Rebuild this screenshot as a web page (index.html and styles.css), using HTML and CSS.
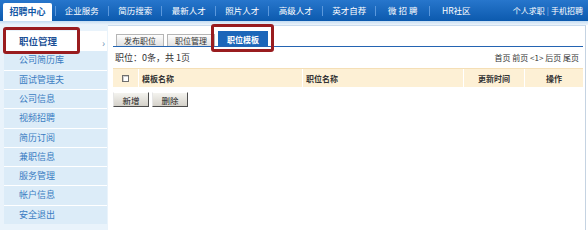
FILE: index.html
```html
<!DOCTYPE html>
<html lang="zh-CN">
<head>
<meta charset="utf-8">
<title>招聘中心 - 职位模板</title>
<link rel="stylesheet" href="styles.css">
</head>
<body>
<header class="topbar">
  <nav class="nav">
    <a class="nav-item active">招聘中心</a>
    <a class="nav-item sep">企业服务</a>
    <a class="nav-item sep">简历搜索</a>
    <a class="nav-item sep">最新人才</a>
    <a class="nav-item sep">照片人才</a>
    <a class="nav-item sep">高级人才</a>
    <a class="nav-item sep">英才自荐</a>
    <a class="nav-item sep">微 招 聘</a>
    <a class="nav-item">HR社区</a>
  </nav>
  <div class="user-links">个人求职<span class="bar">|</span>手机招聘</div>
</header>
<div class="strip"></div>
<div class="main">
  <aside class="sidebar">
    <div class="side-current"><span>职位管理</span><span class="arrow">›</span></div>
    <ul class="side-list">
      <li>公司简历库</li>
      <li>面试管理夫</li>
      <li>公司信息</li>
      <li>视频招聘</li>
      <li>简历订阅</li>
      <li>兼职信息</li>
      <li>服务管理</li>
      <li>帐户信息</li>
      <li>安全退出</li>
    </ul>
  </aside>
  <section class="content">
    <div class="tabs">
      <span class="tab">发布职位</span>
      <span class="tab">职位管理</span>
      <span class="tab current">职位模板</span>
    </div>
    <div class="info-row">
      <span>职位：0条，共 1页</span>
      <span class="pager">首页 前页 &lt;1&gt; 后页 尾页</span>
    </div>
    <div class="grid-head">
      <div class="cell check"><span class="box"></span></div>
      <div class="cell">模板名称</div>
      <div class="cell">职位名称</div>
      <div class="cell center">更新时间</div>
      <div class="cell center">操作</div>
    </div>
    <div class="actions">
      <button class="btn">新增</button>
      <button class="btn">删除</button>
    </div>
  </section>
</div>
<div class="mark mark-side"></div>
<div class="mark mark-tab"></div>
</body>
</html>
```
FILE: styles.css
```css
* { box-sizing: border-box; margin: 0; padding: 0; }
body {
  width: 588px;
  height: 230px;
  overflow: hidden;
  position: relative;
  background: #fff;
  font-family: "Noto Sans CJK SC", "Liberation Sans", sans-serif;
  font-size: 9px;
  color: #333;
}
.topbar {
  height: 21px;
  background: linear-gradient(#2776cc, #0c5aae);
  display: flex;
  justify-content: space-between;
}
.nav { display: flex; padding-left: 3px; height: 21px; }
.nav-item {
  display: block;
  width: 53.5px;
  line-height: 21px;
  text-align: center;
  color: #fff;
  position: relative;
  font-size: 8.5px;
}
.nav-item.sep::after {
  content: "";
  position: absolute;
  right: 0;
  top: 6px;
  height: 10px;
  width: 1px;
  background: #5b98dc;
}
.nav-item.active {
  width: 49px;
  margin-right: 3px;
  margin-top: 3px;
  height: 18px;
  line-height: 18px;
  background: #fff;
  color: #1257a5;
  font-weight: bold;
  font-size: 9px;
  border-radius: 2px 2px 0 0;
}
.nav-item.active + .nav-item::before {
  content: "";
  position: absolute;
  left: 0;
  top: 6px;
  height: 10px;
  width: 1px;
  background: #5b98dc;
}
.user-links { color: #fff; line-height: 21px; padding-right: 5px; font-size: 8px; }
.user-links .bar { color: #8fb9e8; margin: 0 2px; }
.strip { height: 4px; background: linear-gradient(#c4dcf2, #eef5fc); }
.main { display: flex; height: 205px; }
.sidebar {
  width: 108px;
  background: #e9f3fb;
  padding: 6px 1px 0 4px;
}
.side-current {
  height: 19.4px;
  background: #fff;
  display: flex;
  justify-content: space-between;
  align-items: center;
  padding-left: 15px;
  padding-right: 2px;
  font-weight: bold;
  color: #1b4f96;
  font-size: 9.5px;
}
.side-current .arrow { color: #6b8fb5; font-weight: normal; font-size: 10px; margin-top: 3px; }
.side-list { list-style: none; }
.side-list li {
  height: 19.3px;
  line-height: 18.3px;
  border-top: 1px solid #fff;
  background: #dcecf8;
  padding-left: 15px;
  color: #3a7cc2;
}
.content {
  flex: 1;
  margin-right: 2px;
  border-top: 1px solid #cadcee;
  border-right: 1px solid #c5d3e2;
  padding: 0 2px 0 5px;
}
.tabs {
  height: 21px;
  display: flex;
  align-items: flex-end;
  gap: 3px;
  padding-left: 3px;
  border-bottom: 1px solid #2464b2;
}
.tab {
  width: 48px;
  height: 12px;
  line-height: 11px;
  text-align: center;
  background: linear-gradient(#fdfdfd, #e1e1e1);
  border: 1px solid #b5b5b5;
  border-bottom: none;
  color: #333;
  font-size: 8px;
}
.tab.current {
  width: 50px;
  height: 15px;
  line-height: 15px;
  background: #1b66b9;
  border-color: #1b66b9;
  color: #fff;
  font-weight: bold;
}
.info-row {
  height: 21px;
  display: flex;
  justify-content: space-between;
  align-items: center;
  padding: 0 4px 0 2px;
}
.pager { font-size: 8px; }
.grid-head {
  display: grid;
  grid-template-columns: 25px 164px 161px 61px 1fr;
  height: 19px;
  background: #fdf0d5;
  border-top: 1px solid #f5dfb6;
  font-weight: bold;
  font-size: 8px;
  color: #333;
}
.cell {
  display: flex;
  align-items: center;
  padding-left: 3px;
  border-left: 1px solid #fff;
}
.cell:first-child { border-left: none; }
.cell.center { justify-content: center; padding-left: 0; }
.cell.check { justify-content: center; padding-left: 0; }
.box {
  width: 7px;
  height: 7px;
  border: 1px solid #6f6f6f;
  background: #fff;
  box-shadow: inset 1px 1px 0 #cfcfcf;
}
.actions { display: flex; gap: 3px; margin-top: 5px; }
.btn {
  width: 36px;
  height: 15px;
  font: inherit;
  font-size: 8.5px;
  color: #222;
  background: linear-gradient(#f4f3ef, #d5d2ca);
  border: 1px solid;
  border-color: #fff #4d4d4d #4d4d4d #e6e6e6;
}
.mark {
  position: absolute;
  border: 3px solid #991c1f;
  border-radius: 3px;
}
.mark-side { left: 3px; top: 27px; width: 77px; height: 27px; }
.mark-tab { left: 211px; top: 24px; width: 63px; height: 28px; }
```
